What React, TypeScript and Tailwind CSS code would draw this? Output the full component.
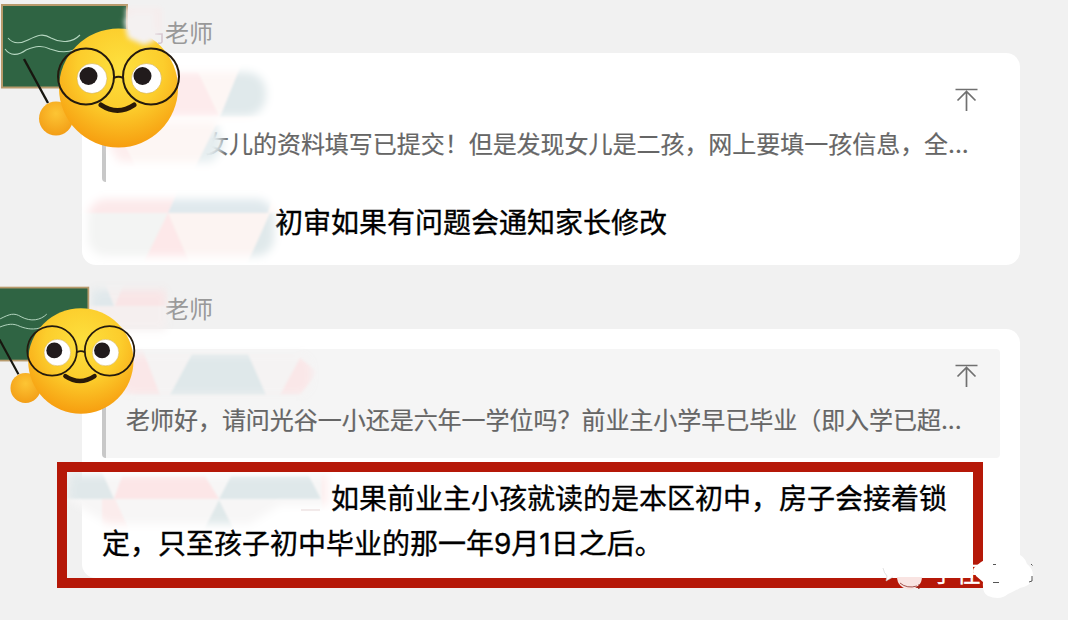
import { ReactNode } from "react";

interface MessageProps {
  name: string;
  quote: string;
  quoteClass: string;
  quoteTextClass: string;
  children: ReactNode;
  className: string;
}

const TopArrow = () => (
  <svg
    width="24"
    height="24"
    viewBox="0 0 24 24"
    fill="none"
    stroke="#707070"
    strokeWidth="1.7"
  >
    <path d="M0.500 1.500H22.500M11.500 3V23M2.500 12.500L11.500 3.500L20.500 12.500" />
  </svg>
);

const Teacher = ({ id, className }: { id: string; className: string }) => (
  <svg className={className} viewBox="0 0 182 150" fill="none">
    <defs>
      <radialGradient id={`face-${id}`} cx="0.52" cy="0.32" r="0.72">
        <stop offset="0" stopColor="#fde03e" />
        <stop offset="0.5" stopColor="#fccd2c" />
        <stop offset="1" stopColor="#f6980c" />
      </radialGradient>
      <radialGradient id={`hand-${id}`} cx="0.5" cy="0.35" r="0.7">
        <stop offset="0" stopColor="#fdc534" />
        <stop offset="1" stopColor="#f29b14" />
      </radialGradient>
    </defs>
    <rect x="2" y="5" width="125" height="82.5" fill="#2f6443" stroke="#b89a6c" strokeWidth="2" />
    <path
      d="M8 38C13 44 20 44 28 40C38 35 43 33 51 38C62 44 73 42 80 35M5 49C10 56 18 56 26 50C36 46 42 45 50 49C58 52 66 53 74 50"
      stroke="#b5d6c0"
      strokeWidth="1.1"
    />
    <circle cx="56" cy="118.5" r="17" fill={`url(#hand-${id})`} />
    <circle cx="118.5" cy="88" r="59.5" fill={`url(#face-${id})`} />
    <path d="M24 59L48 103" stroke="#17160f" strokeWidth="2.4" />
    <circle cx="92" cy="78.5" r="15" fill="#fff" stroke="#c9a54a" strokeWidth="0.5" />
    <circle cx="146.5" cy="78.500" r="15" fill="#fff" stroke="#c9a54a" strokeWidth="0.5" />
    <circle cx="88.5" cy="76" r="9" fill="#211b1c" />
    <circle cx="142.500" cy="76" r="9" fill="#211b1c" />
    <g stroke="#241a0e" strokeWidth="2">
      <circle cx="86" cy="76.5" r="28" />
      <circle cx="151" cy="76.5" r="28" />
      <path d="M114 78Q118.500 75.500 123 78" />
    </g>
    <path d="M101 105Q117.500 116 134 105" stroke="#2a1a08" strokeWidth="5" strokeLinecap="round" />
  </svg>
);

// soft pastel triangles covering the names
const Mosaic = () => (
  <svg
    className="pointer-events-none absolute inset-0"
    width="1068"
    height="620"
    viewBox="0 0 1068 620"
  >
    <defs>
      <filter id="soft" x="-20%" y="-20%" width="140%" height="140%">
        <feGaussianBlur stdDeviation="4" />
      </filter>
      <filter id="edge" x="-20%" y="-20%" width="140%" height="140%">
        <feGaussianBlur stdDeviation="0.8" />
      </filter>
      <mask id="strokes">
        <g fill="#fff" filter="url(#soft)">
          <rect x="120" y="72" width="146" height="44" rx="20" />
          <path d="M108 122H216L221 138L226 144L212 162H120Q106 150 108 122Z" />
          <rect x="88" y="199" width="186" height="57" rx="18" />
          <path d="M92 290H166V330H92Z" />
          <rect x="120" y="354" width="192" height="41" rx="14" />
          <path d="M70 475H328V505H280L250 524H108L68 500Z" />
        </g>
      </mask>
    </defs>
    <g mask="url(#strokes)">
      <g filter="url(#edge)">
        <path d="M110 60H290V172H90Z" fill="#fdf6f4" />
        <path d="M160 72H198L219 116H140Z" fill="#fdebec" />
        <path d="M243 60H280V117H220Z" fill="#e0e9eb" />
        <path d="M216 125H235V170H194Z" fill="#e6eef0" />
        <path d="M104 145H125L136 168H100Z" fill="#fdeeee" />
        <path d="M80 190H290V264H80Z" fill="#fcf4f2" />
        <path d="M80 190H178L168 213H80Z" fill="#fce9ea" />
        <path d="M178 190H275L268 213H168Z" fill="#e0e9ed" />
        <path d="M80 213H168L145 264H80Z" fill="#f3f4f3" />
        <path d="M168 213L190 264H143Z" fill="#fde8e9" />
        <path d="M270 213H290V264H247Z" fill="#e0e9eb" />
        <path d="M80 280H180V340H80Z" fill="#f5efef" />
        <path d="M90 280H104L114 306H90Z" fill="#e0e8eb" />
        <path d="M125 280H168V306H115Z" fill="#f9e5e6" />
        <path d="M110 345H330V400H110Z" fill="#f5f3f3" />
        <path d="M126 348H142L160 395H120Z" fill="#fae7e8" />
        <path d="M192 354H248L266 395H170Z" fill="#dfe8ea" />
        <path d="M300 358L318 372L300 395H280Z" fill="#fae7e8" />
        <path d="M60 465H340V535H60Z" fill="#f7f6f6" />
        <path d="M60 472H102L114 499H60Z" fill="#e0e8ea" />
        <path d="M122 476H205L219 499H114Z" fill="#fce6e7" />
        <path d="M231 476H309L321 499H219Z" fill="#dfe8ea" />
        <path d="M219 500L234 530H204Z" fill="#e0e9ea" />
        <path d="M102 499H115L130 532H102Z" fill="#fbecec" />
        <path d="M321 475H340V510H322Z" fill="#fdefef" />
      </g>
    </g>
    <path d="M301 510H320" stroke="#eadcdc" strokeWidth="1.2" />
  </svg>
);

// smudge over the first part of the sender's name
const NameSmudge = () => (
  <svg
    className="pointer-events-none absolute top-0 left-[112px]"
    width="60"
    height="56"
    viewBox="0 0 60 56"
  >
    <defs>
      <filter id="smudge" x="-30%" y="-30%" width="160%" height="160%">
        <feGaussianBlur stdDeviation="2.5" />
      </filter>
    </defs>
    <path
      d="M43 34H50V42Q49 44 46 43"
      fill="none"
      stroke="#d3c2cc"
      strokeWidth="1.5"
    />
    <g filter="url(#smudge)">
      <path d="M14 8H50V32H14Z" fill="#f6eded" />
      <path d="M12 20L22 12H42L44 40L32 45L16 38Z" fill="#f4f1f1" />
    </g>
  </svg>
);

const Message = ({
  name,
  quote,
  quoteClass,
  quoteTextClass,
  children,
  className,
}: MessageProps) => (
  <div className="flex flex-col">
    <div className="pt-px pl-[83px] text-2xl leading-[39px] text-[#999999]">{name}</div>
    <div className={`rounded-[14px] bg-white px-5 pt-5 ${className}`}>
      <div
        className={`flex h-[109px] flex-col rounded-sm border-l-4 border-[#c8c8c8] pr-[21px] ${quoteClass}`}
      >
        <div className="flex h-[53px] items-center justify-end">
          <TopArrow />
        </div>
        <p
          className={`pt-px text-2xl leading-9 tracking-[-0.03px] whitespace-nowrap text-[#666666] [-webkit-text-stroke:0.2px] ${quoteTextClass}`}
        >
          {quote}
        </p>
      </div>
      {children}
    </div>
  </div>
);

const Watermark = () => (
  <div className="absolute top-[548px] left-[880px]">
    <svg width="160" height="52" viewBox="0 0 160 52" fill="#fff">
      <ellipse cx="17" cy="18" rx="15" ry="12" />
      <path d="M3 20Q4 25 7 28L6 33L13 29" stroke="#cfcfcf" strokeWidth="0.6" />
      <path d="M17 29A12.500 12.500 0 1 0 42 29Z" fill="#f9e4e2" />
      <path d="M20 35Q27 41 37 38L39 41L39 36" stroke="#8b2c25" strokeWidth="0.8" fill="none" />
      <text x="51" y="34" fontSize="25" stroke="#fff" strokeWidth="0.3">
        学在
      </text>
      <path d="M40 10H92V27Q70 30 46 28Z" />
      <circle cx="98" cy="23" r="5" />
      <path d="M96 18Q104 10 116 9Q123 3 133 4Q145 7 147 16Q155 22 152 32Q150 38 140 40Q133 44 128 46Q120 53 108 48Q102 45 103 34L96 28Z" />
      <g stroke="#555" strokeWidth="1" fill="none">
        <path d="M113 16.500H116M113 34.500H119M151 16L152.500 17.500M152 28V33L149 34" />
      </g>
    </svg>
  </div>
);

const App = () => {
  return (
    <div className="relative h-[620px] w-[1068px] overflow-hidden bg-[#f1f1f1] font-['Inter','Noto_Sans_CJK_SC',sans-serif]">
      <div className="flex flex-col gap-6 pt-[13px] pr-12 pl-[82px]">
        <Message
          name="老师"
          quote="女儿的资料填写已提交！但是发现女儿是二孩，网上要填一孩信息，全..."
          quoteClass=""
          quoteTextClass="pl-[99px]"
          className="h-[212px]"
        >
          <p className="mt-[19px] pl-[173px] text-[28px] leading-[45px] text-black [-webkit-text-stroke:0.35px]">
            初审如果有问题会通知家长修改
          </p>
        </Message>
        <Message
          name="老师"
          quote="老师好，请问光谷一小还是六年一学位吗？前业主小学早已毕业（即入学已超..."
          quoteClass="bg-[#f5f5f5]"
          quoteTextClass="pl-5"
          className="h-[249px]"
        >
          <p className="mt-[19px] w-[870px] indent-[229px] text-[28px] leading-[45px] text-black [-webkit-text-stroke:0.35px]">
            如果前业主小孩就读的是本区初中，房子会接着锁定，只至孩子初中毕业的那一年9月1日之后。
          </p>
        </Message>
      </div>

      <Mosaic />
      <Teacher id="a" className="absolute top-0 left-0 h-[150px] w-[182px]" />
      <Teacher id="b" className="absolute top-[283px] -left-6 h-[133px] w-[161px]" />
      <NameSmudge />
      <div className="absolute top-[462px] left-[57px] h-[126px] w-[926px] border-[10px] border-[#b51808]" />
      <Watermark />
    </div>
  );
};

export default App;
